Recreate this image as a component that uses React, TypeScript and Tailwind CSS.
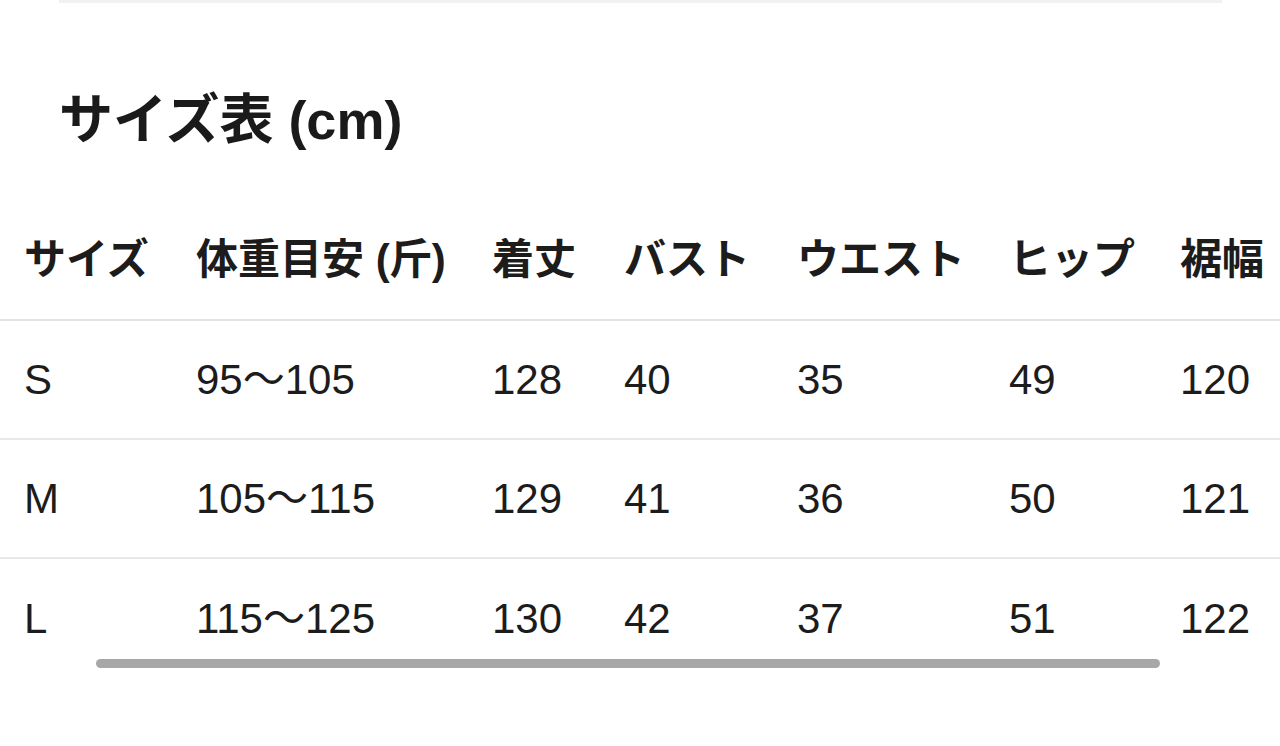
const headers = ['サイズ', '体重目安 (斤)', '着丈', 'バスト', 'ウエスト', 'ヒップ', '裾幅'];

const widths = ['w-[172px]', 'w-[296px]', 'w-[132px]', 'w-[173px]', 'w-[212px]', 'w-[171px]', 'w-[132px]'];

const rows = [
  ['S', '95～105', '128', '40', '35', '49', '120'],
  ['M', '105～115', '129', '41', '36', '50', '121'],
  ['L', '115～125', '130', '42', '37', '51', '122'],
];

export default function App() {
  return (
    <div className="min-h-screen w-[1280px] h-[746px] overflow-hidden bg-white text-[#1c1c1c] font-['Liberation_Sans','Noto_Sans_CJK_JP',sans-serif]">
      <div className="ml-[59px] mr-[58px] h-[3px] bg-[#f1f1f1]" />

      <h2 className="mt-[87px] mb-[50px] pl-[59px] text-[54px] leading-[60px] font-bold text-[#1a1a1a]">
        サイズ表 (cm)
      </h2>

      <div className="relative overflow-hidden">
        <table className="border-collapse whitespace-nowrap table-fixed w-[1288px]">
          <thead>
            <tr className="h-[120px] border-b-2 border-[#e2e2e2]">
              {headers.map((h, i) => (
                <th
                  key={h}
                  className={`${widths[i]} px-6 text-left align-middle text-[42px] font-bold`}
                >
                  {h}
                </th>
              ))}
            </tr>
          </thead>
          <tbody>
            {rows.map((r, ri) => (
              <tr
                key={r[0]}
                className={`h-[119px] ${ri < rows.length - 1 ? 'border-b-2 border-[#e8e8e8]' : ''}`}
              >
                {r.map((c, ci) => (
                  <td key={ci} className="px-6 text-left align-middle text-[42px] font-normal">
                    {c}
                  </td>
                ))}
              </tr>
            ))}
          </tbody>
        </table>
        {/* scroll indicator overlay */}
        <div className="absolute left-[96px] top-[459px] w-[1064px] h-[9px] rounded-full bg-[#a7a7a7]" />
      </div>
    </div>
  );
}
